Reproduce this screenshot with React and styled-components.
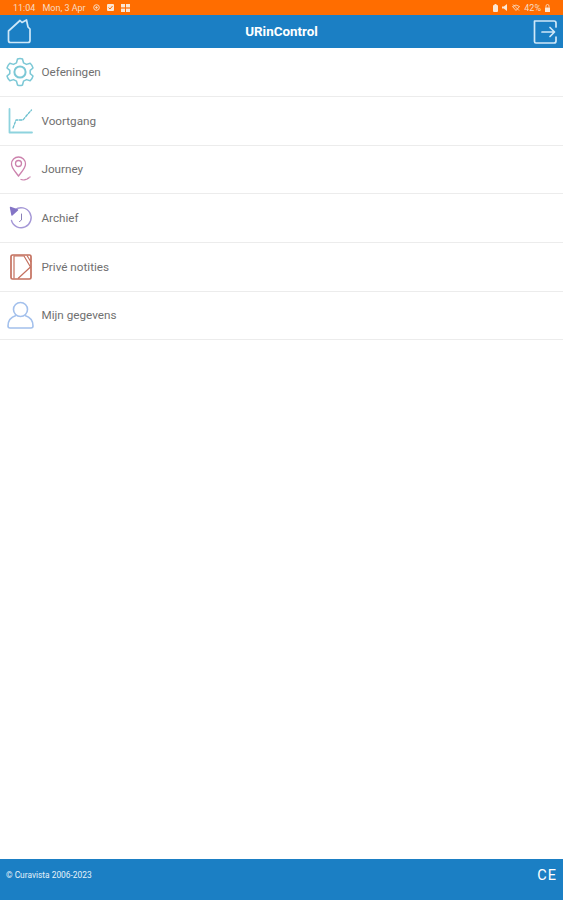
import React from "react";
import styled, { createGlobalStyle } from "styled-components";

const GlobalStyle = createGlobalStyle`
  html, body {
    margin: 0;
    padding: 0;
    background: #ffffff;
    font-family: "Roboto", "Liberation Sans", sans-serif;
  }
`;

const HomeIcon = () => (
  <svg width="24" height="25" viewBox="0 0 24 25" fill="none" stroke="#cfe8f8" strokeWidth="1.7" strokeLinejoin="round" strokeLinecap="round">
    <path d="M1.5 12 L13 1.5 L15 3.5 L19.5 1 L21 8 L23 10 V21.5 Q23 23.5 21 23.5 H3.5 Q1.5 23.5 1.5 21.5 Z" />
  </svg>
);

const ExitIcon = () => (
  <svg width="24" height="24" viewBox="0 0 24 24" fill="none" stroke="#cfe8f8" strokeWidth="1.7" strokeLinecap="round" strokeLinejoin="round">
    <path d="M23 7 V3 Q23 1 21 1 H1.5 V21.5 Q1.5 23 3 23 H21 Q23 23 23 21 V17" />
    <path d="M9 12 H21 M17 7.5 L21.5 12 L17 16.5" />
  </svg>
);

const GearIcon = () => (
  <svg width="30" height="30" viewBox="1 0 30 30" fill="none" stroke="#7cc8d6" strokeWidth="1.5" strokeLinejoin="round">
    <path d="M12.5 2 Q15 0.8 17.5 2 L18.5 5.8 L21.5 7.4 L25.2 6.2 Q27.2 8 28 11 L25.2 13.4 V16.6 L28 19 Q27.2 22 25.2 23.8 L21.5 22.6 L18.5 24.2 L17.5 28 Q15 29.2 12.5 28 L11.5 24.2 L8.5 22.6 L4.8 23.8 Q2.8 22 2 19 L4.8 16.6 V13.4 L2 11 Q2.8 8 4.8 6.2 L8.5 7.4 L11.5 5.8 Z" />
    <circle cx="15" cy="15" r="5.6" strokeWidth="2" />
  </svg>
);

const ChartIcon = () => (
  <svg width="26" height="26" viewBox="0 0 26 26" fill="none" strokeLinecap="round" strokeLinejoin="round">
    <path d="M1.5 1 V24.5 H24" stroke="#8ed3de" strokeWidth="1.8" />
    <path d="M5 20 L8 12 H15 L19 7 L23.5 2" stroke="#6cc0cf" strokeWidth="1.3" strokeDasharray="2.5 1.5" />
  </svg>
);

const PinIcon = () => (
  <svg width="22" height="26" viewBox="0 0 22 26" fill="none" stroke="#cc82ad" strokeWidth="1.3" strokeLinecap="round">
    <path d="M8.5 20 C4 14 1.5 12 1.5 8 A7 7 0 0 1 15.5 8 C15.5 12 13 14 8.5 20 Z" />
    <circle cx="8.5" cy="7.5" r="3" />
    <path d="M11 23.5 C14.5 24.5 17 23.5 20 21" strokeDasharray="2 1.2" />
  </svg>
);

const ArchiveIcon = () => (
  <svg width="24" height="24" viewBox="0 0 24 24" fill="none" stroke="#a497d6" strokeWidth="1.4" strokeLinecap="round">
    <path d="M6 3.8 A10 10 0 1 1 2.5 14.5" />
    <path d="M1.5 1.5 L8.5 4 L3 9 Z" fill="#8475c6" stroke="#8475c6" strokeLinejoin="round" />
    <path d="M12.5 8 V14 L10.5 15.5" stroke="#8a80b8" strokeWidth="1" />
  </svg>
);

const NoteIcon = () => (
  <svg width="22" height="26" viewBox="0 0 22 26" fill="none" stroke="#c4705e" strokeWidth="1.7" strokeLinejoin="round">
    <rect x="1" y="1" width="20" height="24" rx="1.5" />
    <path d="M4 24.5 V2 H14 L20.5 13 L8 24.5" strokeWidth="1.2" />
    <path d="M17 1.5 L21 8" strokeWidth="1.2" />
  </svg>
);

const UserIcon = () => (
  <svg width="27" height="28" viewBox="0 0 27 28" fill="none" stroke="#a3c0ec" strokeWidth="1.6" strokeLinejoin="round">
    <circle cx="13.5" cy="8.5" r="7" />
    <path d="M9 14.5 C4 16 1 20 1 25 Q1 27 3 27 H24 Q26 27 26 25 C26 20 23 16 18 14.5" />
  </svg>
);

const AlarmIcon = () => (
  <svg width="7" height="7" viewBox="0 0 7 7" fill="none" stroke="#f8dcc4" strokeWidth="1">
    <circle cx="3.5" cy="3.5" r="2.8" />
    <circle cx="3.5" cy="3.5" r="0.8" fill="#f8dcc4" />
  </svg>
);

const CheckIcon = () => (
  <svg width="7" height="7" viewBox="0 0 7 7">
    <rect width="7" height="7" rx="1" fill="#fbe6d4" />
    <path d="M1.5 3.5 L3 5 L5.5 2" fill="none" stroke="#ff6d00" strokeWidth="1" />
  </svg>
);

const GridIcon = () => (
  <svg width="9" height="8" viewBox="0 0 9 8" fill="#fbe6d4">
    <rect width="4" height="3.4" />
    <rect x="5" width="4" height="3.4" />
    <rect y="4.6" width="4" height="3.4" />
    <rect x="5" y="4.6" width="4" height="3.4" />
  </svg>
);

const BatterySaverIcon = () => (
  <svg width="5" height="8" viewBox="0 0 5 8" fill="#fbe6d4">
    <rect x="1.5" width="2" height="1" />
    <rect y="1" width="5" height="7" rx="1" />
  </svg>
);

const MuteIcon = () => (
  <svg width="6" height="7" viewBox="0 0 6 7" fill="#fbe6d4">
    <path d="M0 2.5 H1.8 L5 0 V7 L1.8 4.5 H0 Z" />
  </svg>
);

const WifiIcon = () => (
  <svg width="8" height="7" viewBox="0 0 8 7" fill="none" stroke="#f8dcc4" strokeWidth="0.9">
    <path d="M0.5 2.5 Q4 -0.5 7.5 2.5 L4 6.5 Z" />
    <path d="M1 0.5 L7 6.5" />
  </svg>
);

const LockIcon = () => (
  <svg width="5" height="8" viewBox="0 0 5 8">
    <path d="M1 3.5 V2 A1.5 1.5 0 0 1 4 2 V3.5" fill="none" stroke="#fbe6d4" strokeWidth="0.8" />
    <rect y="3.5" width="5" height="4.5" fill="#fbe6d4" />
  </svg>
);

const Page = styled.div`
  width: 563px;
  height: 900px;
  display: flex;
  flex-direction: column;
  overflow: hidden;
`;

const StatusBar = styled.div`
  height: 15px;
  background: #ff6d00;
  color: #f8dcc4;
  font-size: 9px;
  display: flex;
  align-items: center;
  justify-content: space-between;
  padding: 0 13px;
`;

const StatusGroup = styled.div`
  display: flex;
  align-items: center;
  gap: ${({ $gap }) => $gap || 4}px;
`;

const Header = styled.header`
  height: 33px;
  background: #1b7fc4;
  display: flex;
  align-items: center;
  justify-content: space-between;
  padding: 0 6px 0 7px;
  position: relative;
`;

const HeaderTitle = styled.div`
  position: absolute;
  left: 0;
  right: 0;
  text-align: center;
  color: #ffffff;
  font-size: 13.4px;
  font-weight: 700;
`;

const Menu = styled.nav`
  flex: 1;
  display: flex;
  flex-direction: column;
  padding-top: 0.2px;
`;

const Row = styled.div`
  height: 47.7px;
  border-bottom: 1px solid #ececec;
  display: flex;
  align-items: center;
  color: #707070;
  font-size: 11.7px;
`;

const IconSlot = styled.div`
  width: 41.5px;
  display: flex;
  align-items: center;
  justify-content: center;
`;

const Footer = styled.footer`
  height: 41px;
  box-sizing: border-box;
  background: #1b7fc4;
  color: #e6f2fa;
  font-size: 8.4px;
  display: flex;
  align-items: center;
  justify-content: space-between;
  padding: 0 6px 9px 6px;
`;

const CeMark = styled.span`
  font-size: 14.5px;
  letter-spacing: 1px;
  color: #ffffff;
`;

const items = [
  { label: "Oefeningen", icon: <GearIcon /> },
  { label: "Voortgang", icon: <ChartIcon /> },
  { label: "Journey", icon: <PinIcon /> },
  { label: "Archief", icon: <ArchiveIcon /> },
  { label: "Privé notities", icon: <NoteIcon /> },
  { label: "Mijn gegevens", icon: <UserIcon /> },
];

export default function App() {
  return (
    <Page>
      <GlobalStyle />
      <StatusBar>
        <StatusGroup $gap={7}>
          <span>11:04</span>
          <span>Mon, 3 Apr</span>
          <AlarmIcon />
          <CheckIcon />
          <GridIcon />
        </StatusGroup>
        <StatusGroup $gap={4}>
          <BatterySaverIcon />
          <MuteIcon />
          <WifiIcon />
          <span>42%</span>
          <LockIcon />
        </StatusGroup>
      </StatusBar>
      <Header>
        <HomeIcon />
        <HeaderTitle>URinControl</HeaderTitle>
        <ExitIcon />
      </Header>
      <Menu>
        {items.map((item) => (
          <Row key={item.label}>
            <IconSlot>{item.icon}</IconSlot>
            {item.label}
          </Row>
        ))}
      </Menu>
      <Footer>
        <span>© Curavista 2006-2023</span>
        <CeMark>CE</CeMark>
      </Footer>
    </Page>
  );
}
